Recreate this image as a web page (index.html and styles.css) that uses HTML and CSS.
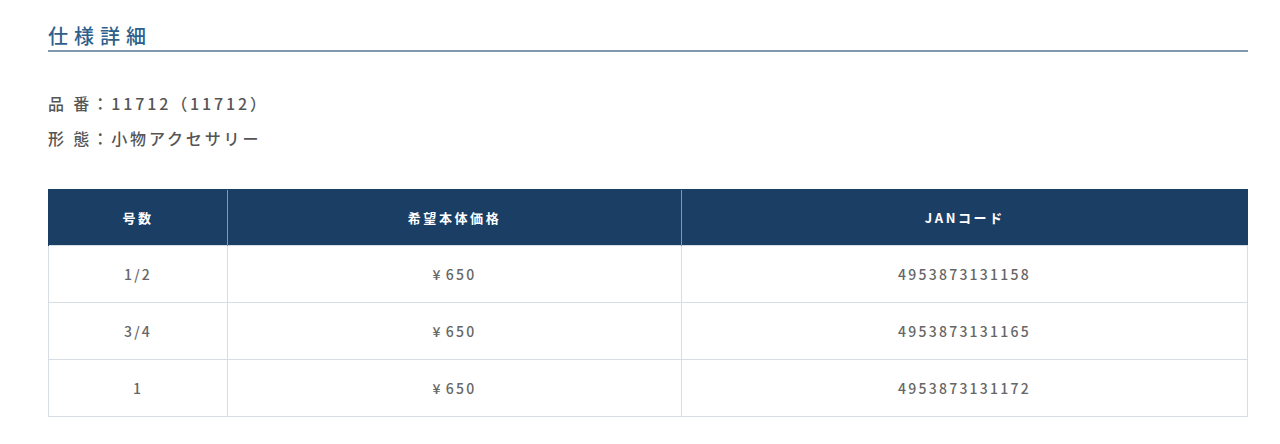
FILE: index.html
```html
<!DOCTYPE html>
<html lang="ja">
<head>
<meta charset="utf-8">
<link rel="stylesheet" href="styles.css">
</head>
<body>
<section class="spec">
  <h2 class="spec-title">仕様詳細</h2>
  <dl class="spec-info">
    <div class="spec-row"><dt>品 番</dt><dd>：11712（11712）</dd></div>
    <div class="spec-row"><dt>形 態</dt><dd>：小物アクセサリー</dd></div>
  </dl>
  <table class="spec-table">
    <thead>
      <tr><th class="c1">号数</th><th class="c2">希望本体価格</th><th class="c3">JANコード</th></tr>
    </thead>
    <tbody>
      <tr><td>1/2</td><td><span class="yen">¥</span>650</td><td>4953873131158</td></tr>
      <tr><td>3/4</td><td><span class="yen">¥</span>650</td><td>4953873131165</td></tr>
      <tr><td>1</td><td><span class="yen">¥</span>650</td><td>4953873131172</td></tr>
    </tbody>
  </table>
</section>
</body>
</html>
```
FILE: styles.css
```css
html, body {
  margin: 0;
  padding: 0;
  background: #fff;
}
body {
  font-family: "Noto Sans CJK JP", "Noto Sans", sans-serif;
  color: #555;
}
.spec {
  width: 1200px;
  padding: 22px 0 0 48px;
}
.spec-title {
  margin: 0;
  font-size: 20px;
  font-weight: 500;
  letter-spacing: 0.3em;
  color: #2f5f8c;
  line-height: 28px;
  padding-bottom: 0;
  border-bottom: 2px solid #8199ae;
}
.spec-info {
  margin: 34px 0 0;
  padding: 0;
}
.spec-row {
  display: flex;
  font-size: 16px;
  font-weight: 500;
  line-height: 35px;
  letter-spacing: 0.18em;
  color: #555;
}
.spec-row dt, .spec-row dd {
  margin: 0;
}
.spec-table {
  margin-top: 33px;
  width: 1200px;
  border-collapse: collapse;
  table-layout: fixed;
}
.spec-table th {
  background: #1b3e65;
  color: #fff;
  font-size: 13px;
  font-weight: 700;
  letter-spacing: 0.2em;
  height: 55px;
  padding: 0;
  border-left: 1px solid #7f9ab8;
  border-top: 1px solid #1b3e65;
}
.spec-table th:first-child { border-left-color: #1b3e65; }
.spec-table .c1 { width: 178px; }
.spec-table .c2 { width: 453px; }
.spec-table td {
  height: 56px;
  padding: 0;
  text-align: center;
  font-size: 14px;
  font-weight: 500;
  letter-spacing: 0.16em;
  color: #666;
  border: 1px solid #d8dde3;
}
.yen {
  margin-right: 3px;
}
```
